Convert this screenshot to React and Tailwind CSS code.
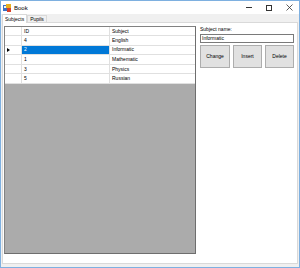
import React from 'react';

const rows = [
  { id: '4', subject: 'English' },
  { id: '2', subject: 'Informatic', selected: true },
  { id: '1', subject: 'Mathematic' },
  { id: '3', subject: 'Physics' },
  { id: '5', subject: 'Russian' },
];

const AppIcon = () => (
  <svg width="8" height="8" viewBox="0 0 8 8">
    <rect x="0" y="1" width="5" height="6" fill="#3b6fc4" />
    <rect x="1" y="2" width="3" height="2" fill="#f4f4f4" />
    <rect x="3" y="0" width="5" height="4" fill="#e8b020" />
    <rect x="4" y="4" width="4" height="4" fill="#d8402a" />
  </svg>
);

const App = () => {
  return (
    <div
      className="w-[300px] h-[268px] border border-[#7eb0e0] bg-[#f0f0f0] flex flex-col overflow-hidden text-black"
      style={{ fontFamily: '"Liberation Sans", Arial, sans-serif' }}
    >
      {/* title bar */}
      <div className="h-[13px] bg-white flex items-center shrink-0">
        <div className="pl-[2px] pr-[3px] flex items-center">
          <AppIcon />
        </div>
        <span className="text-[6px] leading-none">Book</span>
        <div className="ml-auto flex h-full">
          <div className="w-[20px] flex items-center justify-center">
            <div className="w-[6px] h-px bg-[#333]" />
          </div>
          <div className="w-[20px] flex items-center justify-center">
            <div className="w-[6px] h-[6px] border border-[#333]" />
          </div>
          <div className="w-[20px] flex items-center justify-center">
            <svg width="7" height="7" viewBox="0 0 7 7">
              <path d="M0.5 0.5 L6.5 6.5 M6.5 0.5 L0.5 6.5" stroke="#333" strokeWidth="0.8" />
            </svg>
          </div>
        </div>
      </div>

      {/* tab control */}
      <div className="flex-1 flex flex-col px-px pb-[3px]">
        <div className="flex h-[8px] items-end shrink-0">
          <div className="h-[9px] px-[2px] bg-white border border-b-0 border-[#d9d9d9] flex items-center text-[5px] leading-none relative top-px z-10">
            Subjects
          </div>
          <div className="h-[7px] px-[2px] bg-[#f0f0f0] border border-b-0 border-[#d9d9d9] flex items-center text-[5px] leading-none">
            Pupils
          </div>
        </div>
        <div className="flex-1 bg-white border border-[#d9d9d9] flex gap-[4px] pl-px pt-[3px] pb-[9px] pr-[3px]">
          {/* grid */}
          <div className="w-[193px] bg-[#ababab] border border-[#828282] border-r-[#6e6e6e] border-b-[#6e6e6e] flex flex-col text-[5px] leading-none">
            <div className="flex h-[9px] bg-white border-b border-[#e0e0e0]">
              <div className="w-[17px] border-r border-[#e0e0e0]" />
              <div className="w-[88px] border-r border-[#e0e0e0] flex items-center pl-[2px]">ID</div>
              <div className="flex-1 flex items-center pl-[2px]">Subject</div>
            </div>
            {rows.map((r) => (
              <div key={r.id} className="flex h-[9.6px] bg-white border-b border-[#e0e0e0]">
                <div className="w-[17px] border-r border-[#e0e0e0] flex items-center pl-[2px]">
                  {r.selected && (
                    <svg width="3" height="4" viewBox="0 0 3 4">
                      <path d="M0 0 L3 2 L0 4 Z" fill="#000" />
                    </svg>
                  )}
                </div>
                <div
                  className={
                    r.selected
                      ? 'w-[88px] border-r border-[#e0e0e0] flex items-center pl-[2px] bg-[#0078d7] text-white'
                      : 'w-[88px] border-r border-[#e0e0e0] flex items-center pl-[2px]'
                  }
                >
                  {r.id}
                </div>
                <div className="flex-1 flex items-center pl-[2px]">{r.subject}</div>
              </div>
            ))}
          </div>

          {/* right panel */}
          <div className="flex-1 flex flex-col">
            <div className="text-[5px] leading-none h-[6px] mt-px">Subject name:</div>
            <div className="mt-px h-[9px] border border-[#7a7a7a] bg-white flex items-center pl-px text-[5px] leading-none">
              Informatic
            </div>
            <div className="flex gap-[3px] mt-[2px]">
              <button className="w-[30px] h-[23px] bg-[#e1e1e1] border border-[#adadad] text-[5px] leading-none">
                Change
              </button>
              <button className="w-[29px] h-[23px] bg-[#e1e1e1] border border-[#adadad] text-[5px] leading-none">
                Insert
              </button>
              <button className="w-[29px] h-[23px] bg-[#e1e1e1] border border-[#adadad] text-[5px] leading-none">
                Delete
              </button>
            </div>
          </div>
        </div>
      </div>
    </div>
  );
};

export default App;
